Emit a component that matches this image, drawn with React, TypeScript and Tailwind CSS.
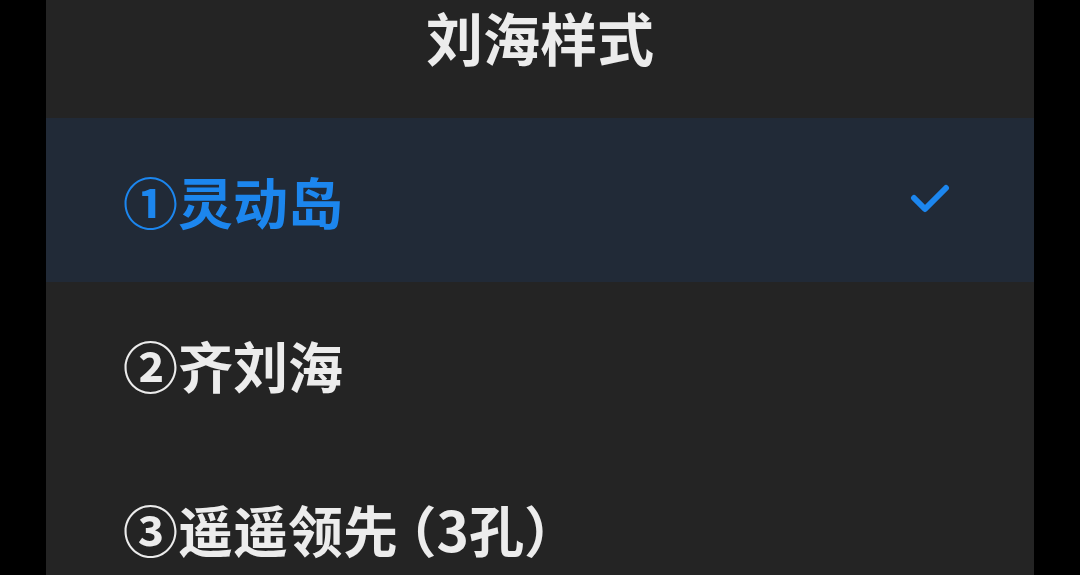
import React from "react";

const options = [
  { label: "①灵动岛", selected: true },
  { label: "②齐刘海", selected: false },
  { label: "③遥遥领先\u2009（3孔）", selected: false },
];

const Check = () => (
  <svg width="42" height="34" viewBox="0 0 42 34" fill="none">
    <path
      d="M4 15 L15 26 L36 5"
      stroke="#1c86ee"
      strokeWidth="6"
      strokeLinecap="round"
      strokeLinejoin="round"
    />
  </svg>
);

export default function App() {
  return (
    <div
      className="w-[1080px] h-[575px] bg-black overflow-hidden"
      style={{ fontFamily: '"Noto Sans CJK SC", "Noto Sans", sans-serif' }}
    >
      <div className="mx-[46px] w-[988px] h-full bg-[#242424] flex flex-col">
        <div className="h-[118px] shrink-0 flex justify-center items-start pt-[2px]">
          <h1 className="text-[57px] leading-[68px] font-semibold text-[#ececec]">
            刘海样式
          </h1>
        </div>
        {options.map((o) => (
          <div
            key={o.label}
            className={`h-[164px] shrink-0 flex items-center justify-between pl-[77px] pr-[82px] ${
              o.selected ? "bg-[#212a37]" : ""
            }`}
          >
            <span
              className={`text-[55px] leading-none font-semibold [font-feature-settings:'halt'] ${
                o.selected ? "text-[#1c86ee]" : "text-[#ececec]"
              }`}
            >
              {o.label}
            </span>
            {o.selected && <Check />}
          </div>
        ))}
      </div>
    </div>
  );
}
